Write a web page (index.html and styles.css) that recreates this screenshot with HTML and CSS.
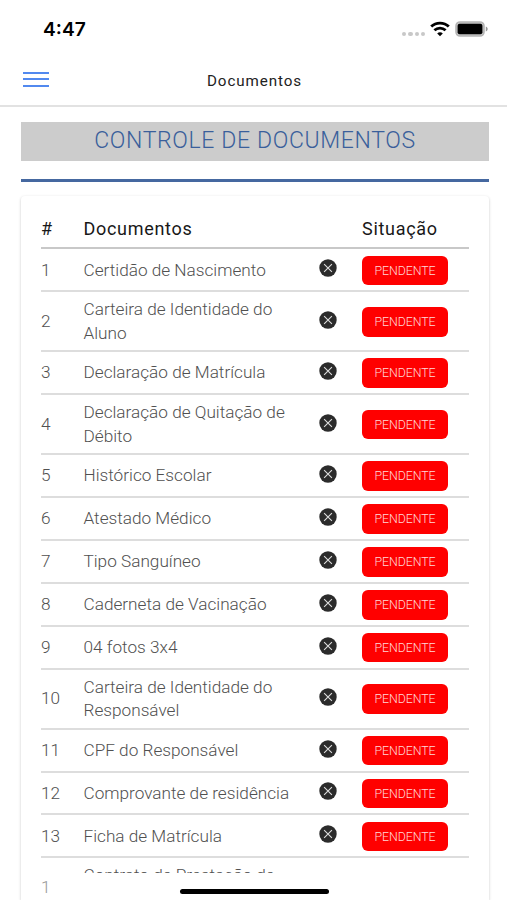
FILE: index.html
```html
<!DOCTYPE html>
<html lang="pt-BR">
<head>
    <meta charset="UTF-8">
    <meta name="viewport" content="width=device-width, initial-scale=1.0">
    <title>Documentos</title>
    <link rel="stylesheet" href="styles.css">
</head>
<body>
    <div class="status-bar">
        <span class="clock">4:47</span>
        <div class="status-icons">
            <div class="signal"><i></i><i></i><i></i><i></i></div>
            <svg class="wifi" width="20" height="16" viewBox="0 0 20 16" fill="none" stroke="#000" stroke-width="2.8">
                <path d="M1.2 5.6C6 0.9 14 0.9 18.8 5.6"/>
                <path d="M4.4 9.3C7.6 6.3 12.4 6.3 15.6 9.3"/>
                <path d="M10 15.2L7.2 12.4C8.8 11 11.2 11 12.8 12.4Z" fill="#000" stroke="none"/>
            </svg>
            <svg class="battery" width="33" height="16" viewBox="0 0 33 16">
                <rect x="1" y="1" width="28" height="14" rx="4" fill="#c4c4c4" stroke="#b5b5b5" stroke-width="1.6"/>
                <rect x="2.6" y="2.8" width="24.8" height="10.4" rx="2" fill="#000"/>
                <path d="M30.8 5.5C33.3 6.4 33.3 9.6 30.8 10.5Z" fill="#999"/>
            </svg>
        </div>
    </div>
    <div class="toolbar">
        <button class="menu-button" aria-label="Menu"><i></i><i></i><i></i></button>
        <h1>Documentos</h1>
    </div>
    <div class="content">
        <h2>CONTROLE DE DOCUMENTOS</h2>
        <hr class="divider">
        <div class="card">
            <div class="table" id="documents">
                <div class="row head">
                    <span>#</span>
                    <span>Documentos</span>
                    <span></span>
                    <span>Situação</span>
                </div>
            </div>
            <div class="next-number">1</div>
        </div>
    </div>
    <div class="home-indicator"></div>
    <script>
        const documents = [
            'Certidão de Nascimento',
            'Carteira de Identidade do Aluno',
            'Declaração de Matrícula',
            'Declaração de Quitação de Débito',
            'Histórico Escolar',
            'Atestado Médico',
            'Tipo Sanguíneo',
            'Caderneta de Vacinação',
            '04 fotos 3x4',
            'Carteira de Identidade do Responsável',
            'CPF do Responsável',
            'Comprovante de residência',
            'Ficha de Matrícula',
            'Contrato de Prestação de Serviços'
        ];
        const table = document.getElementById('documents');

        documents.forEach((name, index) => {
            const number = index < documents.length - 1 ? index + 1 : '';
            const row = document.createElement('div');
            row.classList.add('row');
            row.innerHTML = `
                <span>${number}</span>
                <span class="name">${name}</span>
                <svg class="close-icon" width="18" height="18" viewBox="0 0 18 18">
                    <circle cx="9" cy="9" r="8.7" fill="#2b2b2b"/>
                    <path d="M5.1 5.1L12.9 12.9M12.9 5.1L5.1 12.9" stroke="#ddd" stroke-width="1.1"/>
                </svg>
                <span class="badge">PENDENTE</span>`;
            table.appendChild(row);
        });
    </script>
</body>
</html>
```
FILE: styles.css
```css
* {
    box-sizing: border-box;
}
body {
    font-family: Roboto, 'Liberation Sans', sans-serif;
    margin: 0;
    height: 900px;
    overflow: hidden;
    display: flex;
    flex-direction: column;
    background-color: #fff;
    color: #222;
}
.status-bar {
    height: 56px;
    padding: 2px 19px 0 43px;
    display: flex;
    justify-content: space-between;
    align-items: center;
}
.clock {
    font-family: Inter, sans-serif;
    font-size: 19.2px;
    font-weight: 600;
    color: #000;
}
.status-icons {
    display: flex;
    align-items: center;
}
.signal {
    display: flex;
    gap: 2px;
    margin: 10px 5px 0 0;
}
.signal i {
    width: 4.2px;
    height: 4.6px;
    border-radius: 2px;
    background-color: #c8c8c8;
}
.wifi {
    margin-right: 5px;
}
.toolbar {
    height: 50.5px;
    border-bottom: 2px solid #e2e2e2;
    display: grid;
    grid-template-columns: 80px 1fr 80px;
    align-items: center;
}
.menu-button {
    width: 26px;
    margin: -2px 0 0 22.5px;
    padding: 0;
    border: none;
    background: none;
    display: flex;
    flex-direction: column;
    gap: 4.5px;
}
.menu-button i {
    width: 26px;
    height: 2px;
    background-color: #5289ef;
}
.toolbar h1 {
    margin: 1px 0 0 2px;
    text-align: center;
    font-size: 15.2px;
    font-weight: 400;
    letter-spacing: 0.9px;
}
.content {
    flex: 1;
    min-height: 0;
    padding: 15.5px 18px 0 21px;
    display: flex;
    flex-direction: column;
}
.content h2 {
    flex: none;
    margin: 0;
    height: 38.5px;
    line-height: 37.5px;
    background-color: #ccc;
    color: #3a5f9b;
    text-align: center;
    font-size: 23px;
    font-weight: 350;
    letter-spacing: 0.65px;
}
.divider {
    flex: none;
    width: 100%;
    height: 3px;
    margin: 18px 0 14.5px;
    border: none;
    background-color: #4568a0;
}
.card {
    flex: 1;
    min-height: 0;
    padding: 0 20px;
    border-radius: 4px 4px 0 0;
    box-shadow: 0 1px 3px rgba(0,0,0,0.22);
}
.table {
    height: 677px;
    overflow: hidden;
}
.row {
    min-height: 42.9px;
    padding: 6px 0 5px;
    border-bottom: 2px solid #ddd;
    display: grid;
    grid-template-columns: 42.5px 235.5px 43px 1fr;
    align-items: center;
    font-size: 17.2px;
    font-weight: 300;
    line-height: 23.5px;
    color: #505050;
}
.row.head {
    height: 53.4px;
    padding-top: 20px;
    border-bottom-color: #c8c8c8;
    font-size: 18px;
    font-weight: 400;
    letter-spacing: 0.7px;
    color: #181818;
}
.name {
    width: 210px;
}
.close-icon {
    margin-top: -4px;
}
.badge {
    width: 86px;
    height: 29.5px;
    border-radius: 6px;
    background-color: #f00;
    color: #ffdada;
    text-align: center;
    font-size: 12.4px;
    line-height: 29px;
    letter-spacing: -0.1px;
}
.next-number {
    padding-top: 3px;
    font-size: 17.2px;
    font-weight: 300;
    line-height: 23.5px;
    color: #999;
}
.home-indicator {
    position: absolute;
    left: 180px;
    top: 889px;
    width: 149px;
    height: 5px;
    border-radius: 3px;
    background-color: #000;
}
```
